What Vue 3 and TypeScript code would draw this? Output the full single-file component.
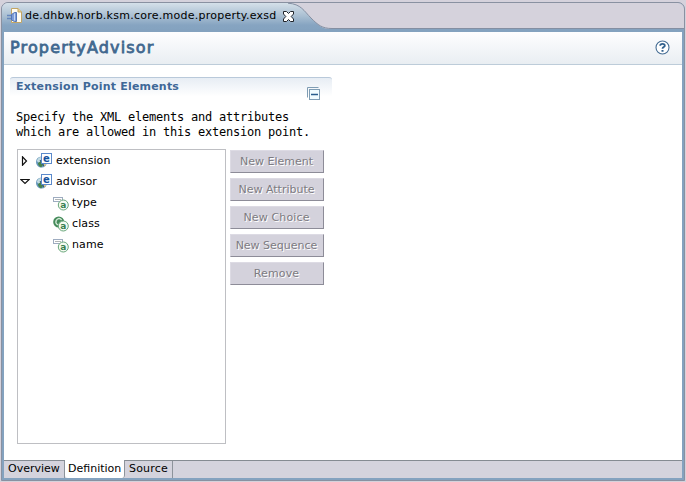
<script setup lang="ts">
interface TreeItem {
  label: string
  icon: 'element' | 'attribute' | 'class'
  state?: 'open' | 'closed'
}

const items: TreeItem[] = [
  { label: 'extension', icon: 'element', state: 'closed' },
  { label: 'advisor', icon: 'element', state: 'open' },
  { label: 'type', icon: 'attribute' },
  { label: 'class', icon: 'class' },
  { label: 'name', icon: 'attribute' },
]

const actions: { label: string; key: string }[] = [
  { label: 'New Element', key: 'element' },
  { label: 'New Attribute', key: 'attr' },
  { label: 'New Choice', key: 'choice' },
  { label: 'New Sequence', key: 'seq' },
  { label: 'Remove', key: 'remove' },
]

const pages: string[] = ['Overview', 'Definition', 'Source']
const activePage = 'Definition'
</script>

<template>
  <div class="desk">
    <div class="editor">
      <div class="tabbar">
        <svg class="tabshape" width="684" height="26" viewBox="0 0 684 26">
          <defs>
            <linearGradient id="tabfill" x1="0" y1="0" x2="0" y2="1">
              <stop offset="0" stop-color="#d5e0e9" />
              <stop offset="0.5" stop-color="#a9bfd2" />
              <stop offset="0.85" stop-color="#86a4c1" />
              <stop offset="1" stop-color="#84a3c0" />
            </linearGradient>
          </defs>
          <path d="M0 26V0H286C299 1 302 8 309 15C317 23 320 26 330 26Z" fill="url(#tabfill)" />
          <path d="M286 .2C299 1 302 8 309 15C316 22 320 25.5 330 25.5H684" fill="none" stroke="#848fa2" />
        </svg>
        <div class="tab">
          <svg width="16" height="16" viewBox="0 0 16 16">
            <path d="M5.5.5H12L15.5 4V14.5H5.5Z" fill="#fffdf2" stroke="#c2a565" />
            <path d="M12 .5V4H15.5" fill="#ead28b" stroke="#c2a565" />
            <path d="M1 7.5H6M1 10.5H6" stroke="#6687bd" stroke-width="1.4" />
            <path d="M5.5 6.5L8.5 4.5H10.5V13.5H8.5L5.5 12Z" fill="#7f9fd8" stroke="#5577b6" />
            <path d="M8.5 5.5V12.5" stroke="#c5d6f4" />
          </svg>
          <span class="filename">de.dhbw.horb.ksm.core.mode.property.exsd</span>
          <svg class="close" width="11" height="11" viewBox="0 0 11 11">
            <path d="M.5.5H3.5L5.5 2.5L7.5.5H10.5V3L8.2 5.5L10.5 8V10.5H7.5L5.5 8.5L3.5 10.5H.5V8L2.8 5.5L.5 3Z" fill="#fff" stroke="#20242b" />
          </svg>
        </div>
      </div>
      <div class="frame">
        <header class="head">
          <h1>PropertyAdvisor</h1>
          <svg width="15" height="15" viewBox="0 0 15 15">
            <circle cx="7.5" cy="7.5" r="6.5" fill="#fff" stroke="#456d94" stroke-width="1.1" />
            <path d="M5.2 5.7C5.2 3.3 9.8 3.3 9.8 5.7C9.8 7.2 7.5 7 7.5 8.7" fill="none" stroke="#32618e" stroke-width="1.8" />
            <path d="M6.5 10H8.5V11.7H6.5Z" fill="#32618e" />
          </svg>
        </header>
        <main>
          <section>
            <div class="section-title">
              <h2>Extension Point Elements</h2>
              <svg width="14" height="14" viewBox="0 0 14 14">
                <path d="M.5 10.5V.5H11.5" fill="none" stroke="#7f9db4" />
                <rect x="2.5" y="2.5" width="10" height="10" fill="#f1fcff" stroke="#7f9db4" />
                <path d="M4 7.5H11" stroke="#295c8c" stroke-width="1.4" />
              </svg>
            </div>
            <p>Specify the XML elements and attributes<br />which are allowed in this extension point.</p>
            <div class="client">
              <div class="tree">
                <div v-for="item in items" :key="item.label" class="row" :class="{ child: !item.state }">
                  <svg v-if="item.state" class="arrow" width="10" height="10" viewBox="0 0 10 10">
                    <path v-if="item.state === 'closed'" d="M2.5.8V9.2L6.5 5Z" fill="#fff" stroke="#111" stroke-width="1.2" />
                    <path v-else d="M.8 2.5H9.2L5 6.5Z" fill="#fff" stroke="#111" stroke-width="1.2" />
                  </svg>
                  <svg v-if="item.icon === 'element'" class="icon" width="16" height="16" viewBox="0 0 16 16">
                    <circle cx="5.5" cy="9" r="5.5" fill="#6597bb" />
                    <path d="M.8 8Q2 4 5 4L6 7L3 10Z" fill="#c3dbe2" />
                    <path d="M2 10L5 8L7 12L5 14.4Q2 13 2 10Z" fill="#47834b" />
                    <path d="M8 11L10.5 9.8Q10 13 8 14Z" fill="#dfc887" />
                    <path d="M4 7L6 10L8 13" fill="none" stroke="#274d78" />
                    <rect x="5.5" y=".5" width="10" height="10" fill="#fff" stroke="#5b8acb" />
                    <text x="10.5" y="8.6" class="glyph-e">e</text>
                  </svg>
                  <svg v-else class="icon" width="16" height="16" viewBox="0 0 16 16">
                    <rect v-if="item.icon === 'attribute'" x=".5" y="2.5" width="9" height="4" fill="#fff" stroke="#9eacc0" />
                    <path v-if="item.icon === 'attribute'" d="M2 4.5H8" stroke="#b0b5b7" />
                    <circle v-if="item.icon === 'class'" cx="5.7" cy="6" r="5.5" fill="#468b5b" />
                    <path v-if="item.icon === 'class'" d="M8.6 4C6 .8 2.3 3.5 3 7Q3.7 9 6 9" fill="none" stroke="#d3e9d6" stroke-width="1.4" />
                    <circle cx="10.3" cy="10" r="5" fill="#f4faf1" stroke="#69a67b" />
                    <text x="10.4" y="13" class="glyph-a">a</text>
                  </svg>
                  <span>{{ item.label }}</span>
                </div>
              </div>
              <div class="actions">
                <button v-for="action in actions" :key="action.key" :class="action.key" disabled><span>{{ action.label }}</span></button>
              </div>
            </div>
          </section>
        </main>
        <nav>
          <div v-for="page in pages" :key="page" class="page" :class="[page.toLowerCase(), { active: page === activePage }]"><span>{{ page }}</span></div>
        </nav>
      </div>
    </div>
  </div>
</template>

<style>
body { background: #d5d2dc; }
</style>

<style scoped>
* { box-sizing: border-box; }
.desk { width: 686px; height: 482px; padding: 2px 1px 1px; background: #d5d2dc; font-family: "DejaVu Sans", sans-serif; font-size: 11px; color: #000; overflow: hidden; }
.editor { height: 479px; border: 1px solid #8991a1; border-radius: 7px 7px 0 0; overflow: hidden; display: flex; flex-direction: column; background: #84a2bf; }
.tabbar { height: 26px; flex: none; display: grid; background: #d5d2dc; }
.tabshape, .tab { grid-area: 1 / 1; display: block; }
.tab { display: flex; align-items: flex-start; padding: 4px 0 0 4px; z-index: 1; }
.tab svg { flex: none; margin-top: 1px; }
.filename { width: 258px; margin-left: 3px; line-height: 18px; letter-spacing: .25px; white-space: nowrap; }
.tab .close { margin-top: 4px; }
.frame { flex: 1; margin: 3px 2px 2px; display: flex; flex-direction: column; background: #fff; }
.head { height: 33px; flex: none; display: flex; justify-content: space-between; align-items: flex-start; padding: 8px 12px 0 6px; background: linear-gradient(#fefeff, #e9eef2); border-bottom: 1px solid #bdccd9; }
h1 { margin: -2px 0 0; font-size: 16px; font-weight: 400; line-height: 20px; letter-spacing: 1.15px; -webkit-text-stroke: .8px #41688f; color: #41688f; white-space: nowrap; }
main { flex: 1; padding: 12px 0 0 6px; }
section { width: 322px; }
.section-title { height: 24px; display: flex; justify-content: space-between; padding: 0 11px 0 6px; border-top: 1px solid #b9c9da; border-radius: 3px 3px 0 0; background: linear-gradient(#e7edf4, #fff 80%); }
.section-title svg { margin-top: 9px; }
h2 { margin: 2px 0 0; font-size: 11px; line-height: 14px; letter-spacing: .2px; color: #3f6897; white-space: nowrap; }
p { margin: 9px 0 0 6px; font: 12px/15px "DejaVu Sans Mono", monospace; letter-spacing: -.224px; white-space: nowrap; }
.client { display: flex; margin: 9px 0 0 7px; gap: 4px; }
.tree { width: 209px; height: 295px; border: 1px solid #bebfc3; }
.row { height: 21px; display: flex; align-items: center; padding-left: 2px; letter-spacing: .1px; }
.row.child { padding-left: 35px; }
.arrow { flex: none; margin-right: 6px; }
.icon { flex: none; margin-right: 4px; }
.child .icon { margin-right: 3px; }
.glyph-e { font: bold 10px "DejaVu Sans", sans-serif; letter-spacing: 0; fill: #17539e; text-anchor: middle; }
.glyph-a { font: bold 9px "DejaVu Sans", sans-serif; letter-spacing: 0; fill: #39804f; text-anchor: middle; }
.actions { display: grid; grid-auto-rows: 23px; row-gap: 5px; align-content: start; padding-top: 1px; }
button { width: 94px; padding: 0 1px 1px 0; border: 1px solid; border-color: #dddbe4 #8d8c98 #8d8c98 #dddbe4; background: #d4d2dc; color: #7d7b81; font: 11px "DejaVu Sans", sans-serif; text-shadow: 1px 1px #fff; white-space: nowrap; }
.choice, .remove { letter-spacing: .15px; }
nav { height: 18px; flex: none; display: flex; border-top: 1px solid #858b92; background: #d4d3dd; }
.page { border-right: 1px solid #8d939b; line-height: 15px; padding-left: 4px; white-space: nowrap; }
.overview { width: 61px; }
.definition { width: 60px; }
.source { width: 48px; letter-spacing: .2px; }
.page.active { margin-top: -1px; background: #fff; border-radius: 0 0 3px 3px; line-height: 17px; padding-left: 3px; }
</style>
